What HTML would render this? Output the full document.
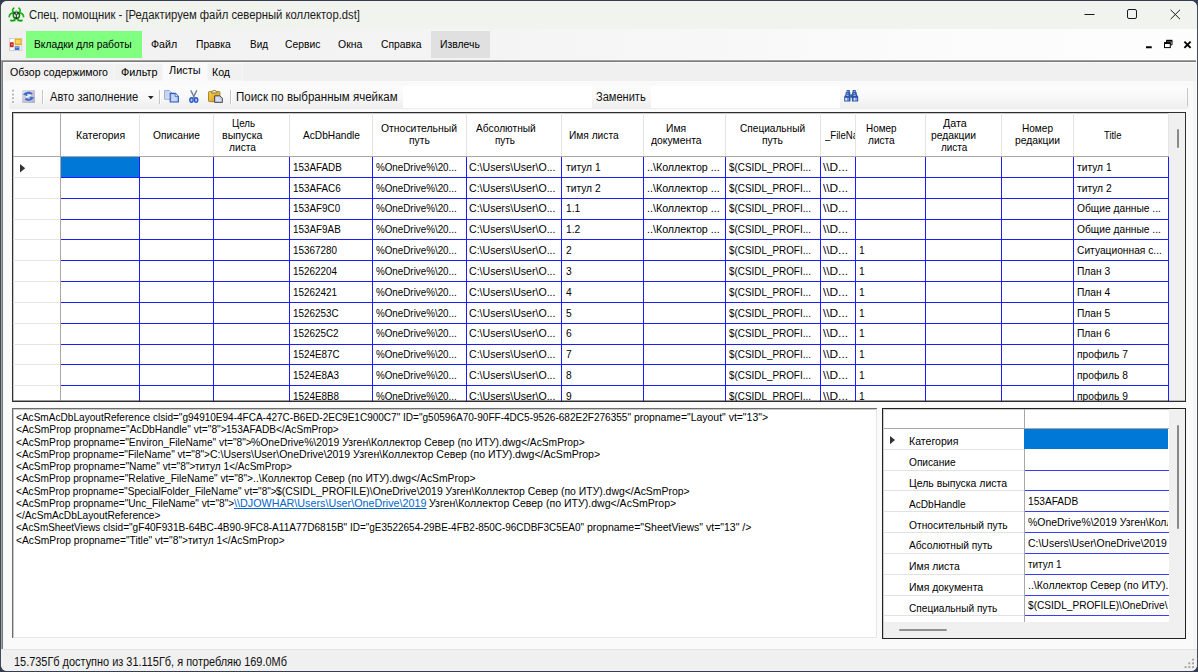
<!DOCTYPE html>
<html lang="ru"><head><meta charset="utf-8"><title>Спец. помощник</title><style>
html,body{margin:0;padding:0}
body{width:1198px;height:672px;background:#353d50;overflow:hidden;position:relative;font-family:"Liberation Sans",sans-serif}
.b{position:absolute}
.t{position:absolute;white-space:pre;transform-origin:0 50%;color:#000}
.clip{position:absolute;overflow:hidden}
u{text-decoration:underline;color:#0066cc}
svg{position:absolute;overflow:visible}
</style></head><body>
<div class="b" style="left:0.00px;top:6.00px;width:1.00px;height:660.00px;background:#444a55;"></div>
<div class="b" style="left:1197.00px;top:6.00px;width:1.00px;height:660.00px;background:#444a55;"></div>
<div class="b" style="left:1.00px;top:1.00px;width:1196.00px;height:670.00px;background:#f0f0f0;border-radius:6px;"></div>
<div class="b" style="left:1.00px;top:1.00px;width:1196.00px;height:28.00px;background:#f1f3ee;border-radius:6px 6px 0 0;"></div>
<div class="b" style="left:1.00px;top:29.00px;width:1196.00px;height:31.50px;background:linear-gradient(90deg,#f0f0f0 0,#f2f2f2 14%,#f4f4f4 40%,#f7f7f7 58%,#fbfbfb 76%,#fdfdfd 100%);"></div>
<div class="b" style="left:25.50px;top:31.00px;width:116.50px;height:26.50px;background:#80ff80;"></div>
<div class="b" style="left:431.40px;top:31.00px;width:58.60px;height:26.50px;background:#e0e0e0;"></div>
<div class="b" style="left:1.00px;top:60.00px;width:1195.00px;height:1.00px;background:#a2a2a2;"></div>
<div class="b" style="left:2.00px;top:61.00px;width:1194.00px;height:1.00px;background:#7a7a7a;"></div>
<div class="b" style="left:1.00px;top:60.00px;width:1.00px;height:588.50px;background:#a0a0a0;"></div>
<div class="b" style="left:2.00px;top:61.00px;width:1.00px;height:587.50px;background:#7c7c7c;"></div>
<div class="b" style="left:1196.00px;top:60.00px;width:1.00px;height:589.00px;background:#ffffff;"></div>
<div class="b" style="left:3.00px;top:62.00px;width:1193.00px;height:19.00px;background:#f0f0f0;box-shadow:inset 1px 1px 0 0 #fbfbfb;"></div>
<div class="b" style="left:3.00px;top:81.00px;width:1189.50px;height:567.50px;background:#fafafa;"></div>
<div class="b" style="left:1192.50px;top:81.00px;width:3.00px;height:567.50px;background:#f5f5f5;"></div>
<div class="b" style="left:5.20px;top:63.30px;width:108.80px;height:17.70px;background:#f1f1f1;box-shadow:inset 0 0 0 1px #f6f6f6;"></div>
<div class="b" style="left:114.40px;top:63.30px;width:48.30px;height:17.70px;background:#f1f1f1;box-shadow:inset 0 0 0 1px #f6f6f6;"></div>
<div class="b" style="left:207.20px;top:63.30px;width:36.10px;height:17.70px;background:#f1f1f1;box-shadow:inset 0 0 0 1px #f6f6f6;"></div>
<div class="b" style="left:162.70px;top:62.00px;width:44.50px;height:19.50px;background:#fafafa;"></div>
<div class="b" style="left:9.00px;top:85.50px;width:1180.00px;height:23.70px;background:linear-gradient(#fcfcfc,#f8f8f8 50%,#efefef 92%,#ededed);border-radius:2px 3px 3px 2px;"></div>
<div class="b" style="left:1187.30px;top:88.00px;width:1.00px;height:18.00px;background:#c8c8c8;"></div>
<div class="b" style="left:403.00px;top:86.00px;width:189.00px;height:22.00px;background:#fff;"></div>
<div class="b" style="left:650.80px;top:86.00px;width:189.20px;height:22.00px;background:#fff;"></div>
<svg style="left:12px;top:89px" width="4" height="15" viewBox="0 0 4 15"><rect x="1" y="1.8" width="1.6" height="1.6" fill="#fff"/><rect x="0.1" y="0.8" width="1.9" height="1.7" fill="#b0b0b0"/><rect x="1" y="5.7" width="1.6" height="1.6" fill="#fff"/><rect x="0.1" y="4.7" width="1.9" height="1.7" fill="#b0b0b0"/><rect x="1" y="9.4" width="1.6" height="1.6" fill="#fff"/><rect x="0.1" y="8.4" width="1.9" height="1.7" fill="#b0b0b0"/><rect x="1" y="13.2" width="1.6" height="1.6" fill="#fff"/><rect x="0.1" y="12.2" width="1.9" height="1.7" fill="#b0b0b0"/></svg>
<div class="b" style="left:42.00px;top:90.00px;width:1.00px;height:14.00px;background:#c6c6c6;"></div>
<div class="b" style="left:43.00px;top:90.00px;width:1.00px;height:14.00px;background:#fefefe;"></div>
<div class="b" style="left:159.00px;top:90.00px;width:1.00px;height:14.00px;background:#c6c6c6;"></div>
<div class="b" style="left:160.00px;top:90.00px;width:1.00px;height:14.00px;background:#fefefe;"></div>
<div class="b" style="left:230.00px;top:90.00px;width:1.00px;height:14.00px;background:#c6c6c6;"></div>
<div class="b" style="left:231.00px;top:90.00px;width:1.00px;height:14.00px;background:#fefefe;"></div>
<svg style="left:148px;top:95.5px" width="6" height="4" viewBox="0 0 6 4"><path d="M0 0h5.6L2.8 3.2z" fill="#222"/></svg>
<div class="b" style="left:12.00px;top:112.00px;width:1174.00px;height:290.00px;background:#fff;box-shadow:inset 0 0 0 1px #2e2e2e, inset 0 0 0 2px rgba(0,0,0,.22);"></div>
<div class="b" style="left:1169.00px;top:113.00px;width:16.00px;height:288.00px;background:#f0f0f0;"></div>
<div class="b" style="left:1176.50px;top:128.50px;width:2.00px;height:19.50px;background:#8a8a8a;border-radius:1px;"></div>
<div class="b" style="left:13.00px;top:156.00px;width:1156.00px;height:1.00px;background:#a8a8a8;"></div>
<div class="b" style="left:60.00px;top:113.00px;width:1.00px;height:288.00px;background:#a8a8a8;"></div>
<div class="b" style="left:139.00px;top:113.00px;width:1.00px;height:43.00px;background:#e4e4e4;"></div>
<div class="b" style="left:213.00px;top:113.00px;width:1.00px;height:43.00px;background:#e4e4e4;"></div>
<div class="b" style="left:289.00px;top:113.00px;width:1.00px;height:43.00px;background:#e4e4e4;"></div>
<div class="b" style="left:372.00px;top:113.00px;width:1.00px;height:43.00px;background:#e4e4e4;"></div>
<div class="b" style="left:466.00px;top:113.00px;width:1.00px;height:43.00px;background:#e4e4e4;"></div>
<div class="b" style="left:561.00px;top:113.00px;width:1.00px;height:43.00px;background:#e4e4e4;"></div>
<div class="b" style="left:643.00px;top:113.00px;width:1.00px;height:43.00px;background:#e4e4e4;"></div>
<div class="b" style="left:725.00px;top:113.00px;width:1.00px;height:43.00px;background:#e4e4e4;"></div>
<div class="b" style="left:820.00px;top:113.00px;width:1.00px;height:43.00px;background:#e4e4e4;"></div>
<div class="b" style="left:855.00px;top:113.00px;width:1.00px;height:43.00px;background:#e4e4e4;"></div>
<div class="b" style="left:925.00px;top:113.00px;width:1.00px;height:43.00px;background:#e4e4e4;"></div>
<div class="b" style="left:1001.00px;top:113.00px;width:1.00px;height:43.00px;background:#e4e4e4;"></div>
<div class="b" style="left:1073.00px;top:113.00px;width:1.00px;height:43.00px;background:#e4e4e4;"></div>
<div class="b" style="left:1168.00px;top:113.00px;width:1.00px;height:43.00px;background:#e4e4e4;"></div>
<div class="b" style="left:13.00px;top:177.00px;width:47.00px;height:1.00px;background:#e6e6e6;"></div>
<div class="b" style="left:13.00px;top:198.00px;width:47.00px;height:1.00px;background:#e6e6e6;"></div>
<div class="b" style="left:13.00px;top:219.00px;width:47.00px;height:1.00px;background:#e6e6e6;"></div>
<div class="b" style="left:13.00px;top:239.00px;width:47.00px;height:1.00px;background:#e6e6e6;"></div>
<div class="b" style="left:13.00px;top:260.00px;width:47.00px;height:1.00px;background:#e6e6e6;"></div>
<div class="b" style="left:13.00px;top:281.00px;width:47.00px;height:1.00px;background:#e6e6e6;"></div>
<div class="b" style="left:13.00px;top:302.00px;width:47.00px;height:1.00px;background:#e6e6e6;"></div>
<div class="b" style="left:13.00px;top:323.00px;width:47.00px;height:1.00px;background:#e6e6e6;"></div>
<div class="b" style="left:13.00px;top:344.00px;width:47.00px;height:1.00px;background:#e6e6e6;"></div>
<div class="b" style="left:13.00px;top:364.00px;width:47.00px;height:1.00px;background:#e6e6e6;"></div>
<div class="b" style="left:13.00px;top:385.00px;width:47.00px;height:1.00px;background:#e6e6e6;"></div>
<div class="b" style="left:139.00px;top:157.00px;width:1.00px;height:244.00px;background:#1c1cff;"></div>
<div class="b" style="left:213.00px;top:157.00px;width:1.00px;height:244.00px;background:#1c1cff;"></div>
<div class="b" style="left:289.00px;top:157.00px;width:1.00px;height:244.00px;background:#1c1cff;"></div>
<div class="b" style="left:372.00px;top:157.00px;width:1.00px;height:244.00px;background:#1c1cff;"></div>
<div class="b" style="left:466.00px;top:157.00px;width:1.00px;height:244.00px;background:#1c1cff;"></div>
<div class="b" style="left:561.00px;top:157.00px;width:1.00px;height:244.00px;background:#1c1cff;"></div>
<div class="b" style="left:643.00px;top:157.00px;width:1.00px;height:244.00px;background:#1c1cff;"></div>
<div class="b" style="left:725.00px;top:157.00px;width:1.00px;height:244.00px;background:#1c1cff;"></div>
<div class="b" style="left:820.00px;top:157.00px;width:1.00px;height:244.00px;background:#1c1cff;"></div>
<div class="b" style="left:855.00px;top:157.00px;width:1.00px;height:244.00px;background:#1c1cff;"></div>
<div class="b" style="left:925.00px;top:157.00px;width:1.00px;height:244.00px;background:#1c1cff;"></div>
<div class="b" style="left:1001.00px;top:157.00px;width:1.00px;height:244.00px;background:#1c1cff;"></div>
<div class="b" style="left:1073.00px;top:157.00px;width:1.00px;height:244.00px;background:#1c1cff;"></div>
<div class="b" style="left:1168.00px;top:157.00px;width:1.00px;height:244.00px;background:#1c1cff;"></div>
<div class="b" style="left:61.00px;top:177.00px;width:1108.00px;height:1.00px;background:#1c1cff;"></div>
<div class="b" style="left:61.00px;top:198.00px;width:1108.00px;height:1.00px;background:#1c1cff;"></div>
<div class="b" style="left:61.00px;top:219.00px;width:1108.00px;height:1.00px;background:#1c1cff;"></div>
<div class="b" style="left:61.00px;top:239.00px;width:1108.00px;height:1.00px;background:#1c1cff;"></div>
<div class="b" style="left:61.00px;top:260.00px;width:1108.00px;height:1.00px;background:#1c1cff;"></div>
<div class="b" style="left:61.00px;top:281.00px;width:1108.00px;height:1.00px;background:#1c1cff;"></div>
<div class="b" style="left:61.00px;top:302.00px;width:1108.00px;height:1.00px;background:#1c1cff;"></div>
<div class="b" style="left:61.00px;top:323.00px;width:1108.00px;height:1.00px;background:#1c1cff;"></div>
<div class="b" style="left:61.00px;top:344.00px;width:1108.00px;height:1.00px;background:#1c1cff;"></div>
<div class="b" style="left:61.00px;top:364.00px;width:1108.00px;height:1.00px;background:#1c1cff;"></div>
<div class="b" style="left:61.00px;top:385.00px;width:1108.00px;height:1.00px;background:#1c1cff;"></div>
<div class="b" style="left:60.60px;top:156.80px;width:78.40px;height:20.00px;background:#0078d7;"></div>
<svg style="left:20px;top:163.9px" width="6" height="9" viewBox="0 0 6 9"><path d="M0 0L5.2 4.3L0 8.6z" fill="#333"/></svg>
<div class="b" style="left:12.00px;top:408.00px;width:865.00px;height:230.00px;background:#fff;box-shadow:inset 1px 1px 0 0 #6c6c6c, inset -1px -1px 0 0 #e6e6e6, inset 2px 2px 0 0 #c8c8c8;"></div>
<div class="b" style="left:882.00px;top:408.00px;width:304.00px;height:230.50px;background:#fff;box-shadow:inset 0 0 0 1px #222, inset 0 0 0 2px rgba(0,0,0,.2);"></div>
<div class="b" style="left:1168.50px;top:409.00px;width:16.00px;height:213.00px;background:#f0f0f0;"></div>
<div class="b" style="left:883.50px;top:622.00px;width:301.00px;height:15.50px;background:#f0f0f0;"></div>
<div class="b" style="left:1176.50px;top:425.00px;width:2.00px;height:104.00px;background:#8a8a8a;border-radius:1px;"></div>
<div class="b" style="left:899.00px;top:629.50px;width:47.50px;height:1.60px;background:#8a8a8a;border-radius:1px;"></div>
<div class="b" style="left:884.00px;top:428.00px;width:285.00px;height:1.00px;background:#a8a8a8;"></div>
<div class="b" style="left:1024.00px;top:409.00px;width:1.00px;height:213.00px;background:#a8a8a8;"></div>
<div class="b" style="left:884.00px;top:449.00px;width:140.00px;height:1.00px;background:#e2e2e2;"></div>
<div class="b" style="left:884.00px;top:470.00px;width:140.00px;height:1.00px;background:#e2e2e2;"></div>
<div class="b" style="left:1025.00px;top:470.00px;width:144.00px;height:1.00px;background:#3c3cff;"></div>
<div class="b" style="left:884.00px;top:490.00px;width:140.00px;height:1.00px;background:#e2e2e2;"></div>
<div class="b" style="left:1025.00px;top:490.00px;width:144.00px;height:1.00px;background:#3c3cff;"></div>
<div class="b" style="left:884.00px;top:511.00px;width:140.00px;height:1.00px;background:#e2e2e2;"></div>
<div class="b" style="left:1025.00px;top:511.00px;width:144.00px;height:1.00px;background:#3c3cff;"></div>
<div class="b" style="left:884.00px;top:532.00px;width:140.00px;height:1.00px;background:#e2e2e2;"></div>
<div class="b" style="left:1025.00px;top:532.00px;width:144.00px;height:1.00px;background:#3c3cff;"></div>
<div class="b" style="left:884.00px;top:553.00px;width:140.00px;height:1.00px;background:#e2e2e2;"></div>
<div class="b" style="left:1025.00px;top:553.00px;width:144.00px;height:1.00px;background:#3c3cff;"></div>
<div class="b" style="left:884.00px;top:574.00px;width:140.00px;height:1.00px;background:#e2e2e2;"></div>
<div class="b" style="left:1025.00px;top:574.00px;width:144.00px;height:1.00px;background:#3c3cff;"></div>
<div class="b" style="left:884.00px;top:595.00px;width:140.00px;height:1.00px;background:#e2e2e2;"></div>
<div class="b" style="left:1025.00px;top:595.00px;width:144.00px;height:1.00px;background:#3c3cff;"></div>
<div class="b" style="left:884.00px;top:615.00px;width:140.00px;height:1.00px;background:#e2e2e2;"></div>
<div class="b" style="left:1025.00px;top:615.00px;width:144.00px;height:1.00px;background:#3c3cff;"></div>
<div class="b" style="left:1024.30px;top:428.90px;width:144.20px;height:20.53px;background:#0078d7;"></div>
<svg style="left:889.8px;top:435.6px" width="6" height="9" viewBox="0 0 6 9"><path d="M0 0L5 4.1L0 8.2z" fill="#333"/></svg>
<div class="b" style="left:1.00px;top:648.50px;width:1196.00px;height:1.50px;background:#e4e4e4;"></div>
<div class="b" style="left:1.00px;top:650.00px;width:1196.00px;height:21.00px;background:#f0f0f0;border-radius:0 0 6px 6px;"></div>
<svg style="left:1184px;top:658px" width="11" height="11" viewBox="0 0 11 11"><rect x="8.2" y="8.2" width="1.8" height="1.8" fill="#9c9c9c"/><rect x="4.4" y="8.2" width="1.8" height="1.8" fill="#9c9c9c"/><rect x="0.7" y="8.2" width="1.8" height="1.8" fill="#9c9c9c"/><rect x="8.2" y="4.4" width="1.8" height="1.8" fill="#9c9c9c"/><rect x="4.4" y="4.4" width="1.8" height="1.8" fill="#9c9c9c"/><rect x="8.2" y="0.7" width="1.8" height="1.8" fill="#9c9c9c"/></svg>
<svg style="left:1084px;top:8px" width="106" height="14" viewBox="0 0 106 14" fill="none" stroke="#1b1b1b" stroke-width="1"><path d="M0.5 6.5H10.5"/><rect x="43.5" y="1.5" width="9" height="9" rx="1.5"/><path d="M86.6 1.8L96 11.2M96 1.8L86.6 11.2"/></svg>
<svg style="left:1145px;top:38px" width="50" height="14" viewBox="0 0 50 14" fill="none" stroke="#000"><path d="M1 9.25H6.75" stroke-width="2"/><path d="M21.6 5V3H27v3.9h-1.6" stroke-width="1"/><path d="M21.2 2.6H27.4" stroke-width="1.6"/><rect x="19.5" y="5.3" width="5.8" height="4.3" stroke-width="1"/><path d="M19 5H25.8" stroke-width="1.8"/><path d="M39.4 3.6L45.6 9.8M45.6 3.6L39.4 9.8" stroke-width="1.9"/></svg>
<!-- app icon: biohazard -->
<svg style="left:7.5px;top:6.5px" width="17" height="15" viewBox="0 0 17 15">
 <g fill="none" stroke="#16b016" stroke-width="1.7" stroke-linecap="round">
  <path d="M5.8 1.2C4 2.6 4.2 5.2 6.4 6.2"/><path d="M11 1.2C12.8 2.6 12.6 5.2 10.4 6.2"/>
  <path d="M1.2 9.6C1.4 6.8 3.6 5.6 5.6 6.6"/><path d="M15.6 9.6C15.4 6.8 13.2 5.6 11.2 6.6"/>
  <path d="M3 13.4C5 14.2 7.2 13.2 7.4 10.8"/><path d="M13.8 13.4C11.8 14.2 9.6 13.2 9.4 10.8"/>
 </g>
 <circle cx="8.4" cy="8.2" r="3.1" fill="none" stroke="#157a15" stroke-width="1.5"/>
 <path d="M6.2 5.4L8.4 8.2L10.6 5.4M8.4 8.2V12.6" stroke="#222" stroke-width="1.2" fill="none" opacity=".8"/>
 <circle cx="8.4" cy="4.2" r="1" fill="#9a9"/>
 <path d="M2.4 13.6h5M9.4 13.6h5" stroke="#0aa00a" stroke-width="1.4"/>
</svg>
<!-- mdi child icon -->
<svg style="left:9.4px;top:38px" width="13.2" height="12.8" viewBox="0 0 13.2 12.8">
 <rect x=".4" y=".4" width="12.4" height="12" fill="#fdfdfd" stroke="#c9c9c9" stroke-width=".8"/>
 <rect x=".9" y="4.3" width="3.9" height="4.9" rx=".6" fill="#c8281e"/><rect x="2" y="5.8" width="1.6" height="1.6" fill="#ee8078"/>
 <rect x="5.6" y=".8" width="7" height="6.4" rx=".6" fill="#e8a818"/><rect x="6.7" y="1.8" width="4.8" height="3.8" fill="#ffd858"/>
 <rect x="5.6" y="8.2" width="5" height="3.7" rx=".4" fill="#3a6fd8"/><rect x="6.3" y="8.7" width="3.6" height="1.4" fill="#7aa4f0"/>
 <path d="M5.2 .8v11.2M.8 9.8h4.4M11.2 8v4" stroke="#e4e4e4" stroke-width=".6"/>
</svg>
<!-- refresh -->
<svg style="left:21.8px;top:90px" width="13" height="13" viewBox="0 0 13 13">
 <defs><linearGradient id="rg" x1="0" y1="0" x2="1" y2="1"><stop offset="0" stop-color="#e0e0ee"/><stop offset=".5" stop-color="#c6c6da"/><stop offset="1" stop-color="#b0b0cc"/></linearGradient></defs>
 <rect width="13" height="13" fill="url(#rg)"/>
 <path d="M.9 4.6L3.4 2.6C5.6 1.2 8.8 1.4 10.8 3.4L9.4 4.6C7.8 3.4 6 3.4 4.8 4.2L5.6 6.2Z" fill="#3a6cc8"/>
 <path d="M12.2 7.4L9.8 9.8C7.6 11.2 4.6 11 2.8 9.2L4.2 8C5.6 9 7.2 9 8.4 8.2L7.4 6.4Z" fill="#3a6cc8"/>
 <path d="M4.4 7.4C5.8 6 7 6.4 8.6 5" stroke="#f6f8fd" stroke-width="1.4" fill="none"/>
</svg>
<!-- copy -->
<svg style="left:164.2px;top:89.6px" width="15" height="12.6" viewBox="0 0 15 12.6">
 <path d="M.6 .6H5.4L8 3.2V9.2H.6Z" fill="#d6e2f6" stroke="#8aa2cc" stroke-width=".9"/>
 <path d="M1.6 2h3M1.6 4h5M1.6 6h3" stroke="#a8bfe6" stroke-width=".8"/>
 <path d="M6.2 3.4H11.4L14.4 6.4V12H6.2Z" fill="#b0c8f2" stroke="#2f5abc" stroke-width="1.1"/>
 <path d="M11.2 3.6V6.6H14.2" fill="#e8f0fc" stroke="#3e68c4" stroke-width=".8"/>
 <path d="M7.6 6h2.6M7.6 8h5M7.6 10h5" stroke="#e4ecfa" stroke-width=".9"/>
</svg>
<!-- cut -->
<svg style="left:188.6px;top:89.8px" width="9.6" height="13" viewBox="0 0 9.6 13">
 <path d="M1.8 .3L5.6 8M7.8 .3L4 8" stroke="#76849c" stroke-width="1.5" fill="none"/>
 <ellipse cx="2.5" cy="10.1" rx="1.7" ry="2.3" fill="#a8c4f4" stroke="#2c5cc8" stroke-width="1.4"/>
 <ellipse cx="7.1" cy="10.1" rx="1.7" ry="2.3" fill="#a8c4f4" stroke="#2c5cc8" stroke-width="1.4"/>
</svg>
<!-- paste -->
<svg style="left:208px;top:89.8px" width="15" height="13" viewBox="0 0 15 13">
 <defs><linearGradient id="pg" x1="0" y1="0" x2="1" y2="1"><stop offset="0" stop-color="#f8d050"/><stop offset="1" stop-color="#dc9c10"/></linearGradient></defs>
 <rect x=".5" y="1.6" width="11.4" height="10" rx=".8" fill="url(#pg)" stroke="#9a7a28" stroke-width=".9"/>
 <path d="M3.6 3.2V1.6L5 .5H7.4L8.8 1.6V3.2Z" fill="#d8c88c" stroke="#8c7a44" stroke-width=".8"/>
 <rect x="5.5" y="1" width="1.4" height="1" fill="#fff8d8"/>
 <path d="M6.6 5.8H11.6L14.4 8.2V12.4H6.6Z" fill="#c4d0e4" stroke="#3c3c44" stroke-width=".9"/>
 <path d="M8 8h3M8 10h5" stroke="#eef2fa" stroke-width=".9"/>
</svg>
<!-- binoculars -->
<svg style="left:844px;top:90px" width="14.4" height="12" viewBox="0 0 14.4 12">
 <g fill="#2c56a8">
  <path d="M2.6 0H5.8V2.2H6.3V4.6H6.5V11.6H.2V6.6L1.6 4.4V2.2H2.6Z"/>
  <path d="M8.6 0H11.8V2.2H12.8V4.4L14.2 6.6V11.6H7.9V4.6H8.1V2.2H8.6Z"/>
  <rect x="6.3" y="4.4" width="1.8" height="3.4"/>
 </g>
 <rect x="1.2" y="7.8" width="2" height="2.8" fill="#dce6f8"/><rect x="3.2" y="7.8" width="1.6" height="2.8" fill="#8aa8e0"/>
 <rect x="9.6" y="7.8" width="2" height="2.8" fill="#dce6f8"/><rect x="11.6" y="7.8" width="1.4" height="2.8" fill="#8aa8e0"/>
 <rect x="2.2" y="4.8" width="2.4" height=".9" fill="#c8d8f4"/><rect x="9.4" y="4.8" width="2.4" height=".9" fill="#c8d8f4"/>
 <rect x="3.4" y=".9" width="1" height="1" fill="#b8ccf0"/><rect x="9.6" y=".9" width="1.6" height=".7" fill="#b8ccf0"/>
 <rect x="2.8" y="2.9" width="1.6" height=".8" fill="#a8c0ec"/><rect x="9.4" y="2.9" width="1.6" height=".8" fill="#a8c0ec"/>
</svg>

<span class="t" style="left:29.40px;top:7.34px;font-size:12px;line-height:16px;transform:scaleX(0.9400);color:#1a1a1a;">Спец. помощник - [Редактируем файл северный коллектор.dst]</span>
<span class="t" style="left:34.40px;top:37.09px;font-size:11px;line-height:15px;transform:scaleX(0.9344);">Вкладки для работы</span>
<span class="t" style="left:151.40px;top:37.09px;font-size:11px;line-height:15px;transform:scaleX(0.9650);">Файл</span>
<span class="t" style="left:196.00px;top:37.09px;font-size:11px;line-height:15px;transform:scaleX(0.9335);">Правка</span>
<span class="t" style="left:249.80px;top:37.09px;font-size:11px;line-height:15px;transform:scaleX(0.9042);">Вид</span>
<span class="t" style="left:285.00px;top:37.09px;font-size:11px;line-height:15px;transform:scaleX(0.9370);">Сервис</span>
<span class="t" style="left:338.30px;top:37.09px;font-size:11px;line-height:15px;transform:scaleX(0.9506);">Окна</span>
<span class="t" style="left:380.60px;top:37.09px;font-size:11px;line-height:15px;transform:scaleX(0.9408);">Справка</span>
<span class="t" style="left:440.00px;top:37.09px;font-size:11px;line-height:15px;transform:scaleX(0.9434);">Извлечь</span>
<span class="t" style="left:10.00px;top:65.49px;font-size:11px;line-height:15px;transform:scaleX(0.9602);">Обзор содержимого</span>
<span class="t" style="left:120.50px;top:65.49px;font-size:11px;line-height:15px;transform:scaleX(0.9877);">Фильтр</span>
<span class="t" style="left:169.00px;top:63.49px;font-size:11px;line-height:15px;transform:scaleX(0.9902);">Листы</span>
<span class="t" style="left:212.00px;top:65.49px;font-size:11px;line-height:15px;transform:scaleX(0.9624);">Код</span>
<span class="t" style="left:50.40px;top:88.74px;font-size:12px;line-height:16px;transform:scaleX(0.9296);color:#111;">Авто заполнение</span>
<span class="t" style="left:236.00px;top:88.74px;font-size:12px;line-height:16px;transform:scaleX(0.9599);color:#111;">Поиск по выбранным ячейкам</span>
<span class="t" style="left:596.30px;top:88.74px;font-size:12px;line-height:16px;transform:scaleX(0.9214);color:#111;">Заменить</span>
<span class="t" style="left:75.80px;top:127.89px;font-size:11px;line-height:15px;transform:scaleX(0.9565);">Категория</span>
<span class="t" style="left:152.50px;top:127.89px;font-size:11px;line-height:15px;transform:scaleX(0.9284);">Описание</span>
<span class="t" style="left:231.50px;top:115.89px;font-size:11px;line-height:15px;transform:scaleX(0.8830);">Цель</span>
<span class="t" style="left:221.50px;top:127.89px;font-size:11px;line-height:15px;transform:scaleX(0.9697);">выпуска</span>
<span class="t" style="left:228.50px;top:139.89px;font-size:11px;line-height:15px;transform:scaleX(0.9275);">листа</span>
<span class="t" style="left:303.00px;top:127.89px;font-size:11px;line-height:15px;transform:scaleX(0.9228);">AcDbHandle</span>
<span class="t" style="left:381.00px;top:121.29px;font-size:11px;line-height:15px;transform:scaleX(0.9456);">Относительный</span>
<span class="t" style="left:408.75px;top:133.29px;font-size:11px;line-height:15px;transform:scaleX(0.9332);">путь</span>
<span class="t" style="left:475.75px;top:121.29px;font-size:11px;line-height:15px;transform:scaleX(0.9248);">Абсолютный</span>
<span class="t" style="left:495.00px;top:133.29px;font-size:11px;line-height:15px;transform:scaleX(0.8995);">путь</span>
<span class="t" style="left:569.30px;top:127.89px;font-size:11px;line-height:15px;transform:scaleX(0.9258);">Имя листа</span>
<span class="t" style="left:666.40px;top:121.29px;font-size:11px;line-height:15px;transform:scaleX(0.9376);">Имя</span>
<span class="t" style="left:650.90px;top:133.29px;font-size:11px;line-height:15px;transform:scaleX(0.9433);">документа</span>
<span class="t" style="left:740.30px;top:121.29px;font-size:11px;line-height:15px;transform:scaleX(0.9187);">Специальный</span>
<span class="t" style="left:762.00px;top:133.29px;font-size:11px;line-height:15px;transform:scaleX(0.9400);">путь</span>
<div class="clip" style="left:824.50px;top:127.89px;width:30.00px;height:15px"><span class="t" style="left:0;top:0;font-size:11px;line-height:15px;transform:scaleX(0.8706);">_FileNa</span></div>
<span class="t" style="left:866.25px;top:121.29px;font-size:11px;line-height:15px;transform:scaleX(0.9008);">Номер</span>
<span class="t" style="left:867.50px;top:133.29px;font-size:11px;line-height:15px;transform:scaleX(0.9189);">листа</span>
<span class="t" style="left:942.50px;top:115.89px;font-size:11px;line-height:15px;transform:scaleX(0.9750);">Дата</span>
<span class="t" style="left:931.25px;top:127.89px;font-size:11px;line-height:15px;transform:scaleX(0.9387);">редакции</span>
<span class="t" style="left:941.25px;top:139.89px;font-size:11px;line-height:15px;transform:scaleX(0.9018);">листа</span>
<span class="t" style="left:1022.00px;top:121.29px;font-size:11px;line-height:15px;transform:scaleX(0.9156);">Номер</span>
<span class="t" style="left:1014.50px;top:133.29px;font-size:11px;line-height:15px;transform:scaleX(0.9387);">редакции</span>
<span class="t" style="left:1104.40px;top:127.89px;font-size:11px;line-height:15px;transform:scaleX(0.8540);">Title</span>
<span class="t" style="left:293.00px;top:159.69px;font-size:11px;line-height:15px;transform:scaleX(0.8970);">153AFADB</span>
<span class="t" style="left:376.25px;top:159.69px;font-size:11px;line-height:15px;transform:scaleX(0.8924);">%OneDrive%\20...</span>
<span class="t" style="left:469.25px;top:159.69px;font-size:11px;line-height:15px;transform:scaleX(0.9628);">C:\Users\User\O...</span>
<span class="t" style="left:565.50px;top:159.69px;font-size:11px;line-height:15px;transform:scaleX(0.9300);">титул 1</span>
<span class="t" style="left:647.10px;top:159.69px;font-size:11px;line-height:15px;transform:scaleX(0.9730);">..\Коллектор ...</span>
<span class="t" style="left:729.00px;top:159.69px;font-size:11px;line-height:15px;transform:scaleX(0.8992);">$(CSIDL_PROFI...</span>
<span class="t" style="left:823.30px;top:159.69px;font-size:11px;line-height:15px;transform:scaleX(1.0760);">\\D...</span>
<span class="t" style="left:1077.30px;top:159.69px;font-size:11px;line-height:15px;transform:scaleX(0.9300);">титул 1</span>
<span class="t" style="left:293.00px;top:180.52px;font-size:11px;line-height:15px;transform:scaleX(0.8970);">153AFAC6</span>
<span class="t" style="left:376.25px;top:180.52px;font-size:11px;line-height:15px;transform:scaleX(0.8924);">%OneDrive%\20...</span>
<span class="t" style="left:469.25px;top:180.52px;font-size:11px;line-height:15px;transform:scaleX(0.9628);">C:\Users\User\O...</span>
<span class="t" style="left:565.50px;top:180.52px;font-size:11px;line-height:15px;transform:scaleX(0.9300);">титул 2</span>
<span class="t" style="left:647.10px;top:180.52px;font-size:11px;line-height:15px;transform:scaleX(0.9730);">..\Коллектор ...</span>
<span class="t" style="left:729.00px;top:180.52px;font-size:11px;line-height:15px;transform:scaleX(0.8992);">$(CSIDL_PROFI...</span>
<span class="t" style="left:823.30px;top:180.52px;font-size:11px;line-height:15px;transform:scaleX(1.0760);">\\D...</span>
<span class="t" style="left:1077.30px;top:180.52px;font-size:11px;line-height:15px;transform:scaleX(0.9300);">титул 2</span>
<span class="t" style="left:293.00px;top:201.35px;font-size:11px;line-height:15px;transform:scaleX(0.8970);">153AF9C0</span>
<span class="t" style="left:376.25px;top:201.35px;font-size:11px;line-height:15px;transform:scaleX(0.8924);">%OneDrive%\20...</span>
<span class="t" style="left:469.25px;top:201.35px;font-size:11px;line-height:15px;transform:scaleX(0.9628);">C:\Users\User\O...</span>
<span class="t" style="left:565.50px;top:201.35px;font-size:11px;line-height:15px;transform:scaleX(0.9300);">1.1</span>
<span class="t" style="left:647.10px;top:201.35px;font-size:11px;line-height:15px;transform:scaleX(0.9730);">..\Коллектор ...</span>
<span class="t" style="left:729.00px;top:201.35px;font-size:11px;line-height:15px;transform:scaleX(0.8992);">$(CSIDL_PROFI...</span>
<span class="t" style="left:823.30px;top:201.35px;font-size:11px;line-height:15px;transform:scaleX(1.0760);">\\D...</span>
<span class="t" style="left:1077.30px;top:201.35px;font-size:11px;line-height:15px;transform:scaleX(0.9300);">Общие данные ...</span>
<span class="t" style="left:293.00px;top:222.18px;font-size:11px;line-height:15px;transform:scaleX(0.8970);">153AF9AB</span>
<span class="t" style="left:376.25px;top:222.18px;font-size:11px;line-height:15px;transform:scaleX(0.8924);">%OneDrive%\20...</span>
<span class="t" style="left:469.25px;top:222.18px;font-size:11px;line-height:15px;transform:scaleX(0.9628);">C:\Users\User\O...</span>
<span class="t" style="left:565.50px;top:222.18px;font-size:11px;line-height:15px;transform:scaleX(0.9300);">1.2</span>
<span class="t" style="left:647.10px;top:222.18px;font-size:11px;line-height:15px;transform:scaleX(0.9730);">..\Коллектор ...</span>
<span class="t" style="left:729.00px;top:222.18px;font-size:11px;line-height:15px;transform:scaleX(0.8992);">$(CSIDL_PROFI...</span>
<span class="t" style="left:823.30px;top:222.18px;font-size:11px;line-height:15px;transform:scaleX(1.0760);">\\D...</span>
<span class="t" style="left:1077.30px;top:222.18px;font-size:11px;line-height:15px;transform:scaleX(0.9300);">Общие данные ...</span>
<span class="t" style="left:293.00px;top:243.01px;font-size:11px;line-height:15px;transform:scaleX(0.8970);">15367280</span>
<span class="t" style="left:376.25px;top:243.01px;font-size:11px;line-height:15px;transform:scaleX(0.8924);">%OneDrive%\20...</span>
<span class="t" style="left:469.25px;top:243.01px;font-size:11px;line-height:15px;transform:scaleX(0.9628);">C:\Users\User\O...</span>
<span class="t" style="left:565.50px;top:243.01px;font-size:11px;line-height:15px;transform:scaleX(0.9300);">2</span>
<span class="t" style="left:729.00px;top:243.01px;font-size:11px;line-height:15px;transform:scaleX(0.8992);">$(CSIDL_PROFI...</span>
<span class="t" style="left:823.30px;top:243.01px;font-size:11px;line-height:15px;transform:scaleX(1.0760);">\\D...</span>
<span class="t" style="left:858.50px;top:243.01px;font-size:11px;line-height:15px;transform:scaleX(0.9300);">1</span>
<span class="t" style="left:1077.30px;top:243.01px;font-size:11px;line-height:15px;transform:scaleX(0.9300);">Ситуационная с...</span>
<span class="t" style="left:293.00px;top:263.84px;font-size:11px;line-height:15px;transform:scaleX(0.8970);">15262204</span>
<span class="t" style="left:376.25px;top:263.84px;font-size:11px;line-height:15px;transform:scaleX(0.8924);">%OneDrive%\20...</span>
<span class="t" style="left:469.25px;top:263.84px;font-size:11px;line-height:15px;transform:scaleX(0.9628);">C:\Users\User\O...</span>
<span class="t" style="left:565.50px;top:263.84px;font-size:11px;line-height:15px;transform:scaleX(0.9300);">3</span>
<span class="t" style="left:729.00px;top:263.84px;font-size:11px;line-height:15px;transform:scaleX(0.8992);">$(CSIDL_PROFI...</span>
<span class="t" style="left:823.30px;top:263.84px;font-size:11px;line-height:15px;transform:scaleX(1.0760);">\\D...</span>
<span class="t" style="left:858.50px;top:263.84px;font-size:11px;line-height:15px;transform:scaleX(0.9300);">1</span>
<span class="t" style="left:1077.30px;top:263.84px;font-size:11px;line-height:15px;transform:scaleX(0.9300);">План 3</span>
<span class="t" style="left:293.00px;top:284.67px;font-size:11px;line-height:15px;transform:scaleX(0.8970);">15262421</span>
<span class="t" style="left:376.25px;top:284.67px;font-size:11px;line-height:15px;transform:scaleX(0.8924);">%OneDrive%\20...</span>
<span class="t" style="left:469.25px;top:284.67px;font-size:11px;line-height:15px;transform:scaleX(0.9628);">C:\Users\User\O...</span>
<span class="t" style="left:565.50px;top:284.67px;font-size:11px;line-height:15px;transform:scaleX(0.9300);">4</span>
<span class="t" style="left:729.00px;top:284.67px;font-size:11px;line-height:15px;transform:scaleX(0.8992);">$(CSIDL_PROFI...</span>
<span class="t" style="left:823.30px;top:284.67px;font-size:11px;line-height:15px;transform:scaleX(1.0760);">\\D...</span>
<span class="t" style="left:858.50px;top:284.67px;font-size:11px;line-height:15px;transform:scaleX(0.9300);">1</span>
<span class="t" style="left:1077.30px;top:284.67px;font-size:11px;line-height:15px;transform:scaleX(0.9300);">План 4</span>
<span class="t" style="left:293.00px;top:305.50px;font-size:11px;line-height:15px;transform:scaleX(0.8970);">1526253C</span>
<span class="t" style="left:376.25px;top:305.50px;font-size:11px;line-height:15px;transform:scaleX(0.8924);">%OneDrive%\20...</span>
<span class="t" style="left:469.25px;top:305.50px;font-size:11px;line-height:15px;transform:scaleX(0.9628);">C:\Users\User\O...</span>
<span class="t" style="left:565.50px;top:305.50px;font-size:11px;line-height:15px;transform:scaleX(0.9300);">5</span>
<span class="t" style="left:729.00px;top:305.50px;font-size:11px;line-height:15px;transform:scaleX(0.8992);">$(CSIDL_PROFI...</span>
<span class="t" style="left:823.30px;top:305.50px;font-size:11px;line-height:15px;transform:scaleX(1.0760);">\\D...</span>
<span class="t" style="left:858.50px;top:305.50px;font-size:11px;line-height:15px;transform:scaleX(0.9300);">1</span>
<span class="t" style="left:1077.30px;top:305.50px;font-size:11px;line-height:15px;transform:scaleX(0.9300);">План 5</span>
<span class="t" style="left:293.00px;top:326.33px;font-size:11px;line-height:15px;transform:scaleX(0.8970);">152625C2</span>
<span class="t" style="left:376.25px;top:326.33px;font-size:11px;line-height:15px;transform:scaleX(0.8924);">%OneDrive%\20...</span>
<span class="t" style="left:469.25px;top:326.33px;font-size:11px;line-height:15px;transform:scaleX(0.9628);">C:\Users\User\O...</span>
<span class="t" style="left:565.50px;top:326.33px;font-size:11px;line-height:15px;transform:scaleX(0.9300);">6</span>
<span class="t" style="left:729.00px;top:326.33px;font-size:11px;line-height:15px;transform:scaleX(0.8992);">$(CSIDL_PROFI...</span>
<span class="t" style="left:823.30px;top:326.33px;font-size:11px;line-height:15px;transform:scaleX(1.0760);">\\D...</span>
<span class="t" style="left:858.50px;top:326.33px;font-size:11px;line-height:15px;transform:scaleX(0.9300);">1</span>
<span class="t" style="left:1077.30px;top:326.33px;font-size:11px;line-height:15px;transform:scaleX(0.9300);">План 6</span>
<span class="t" style="left:293.00px;top:347.16px;font-size:11px;line-height:15px;transform:scaleX(0.8970);">1524E87C</span>
<span class="t" style="left:376.25px;top:347.16px;font-size:11px;line-height:15px;transform:scaleX(0.8924);">%OneDrive%\20...</span>
<span class="t" style="left:469.25px;top:347.16px;font-size:11px;line-height:15px;transform:scaleX(0.9628);">C:\Users\User\O...</span>
<span class="t" style="left:565.50px;top:347.16px;font-size:11px;line-height:15px;transform:scaleX(0.9300);">7</span>
<span class="t" style="left:729.00px;top:347.16px;font-size:11px;line-height:15px;transform:scaleX(0.8992);">$(CSIDL_PROFI...</span>
<span class="t" style="left:823.30px;top:347.16px;font-size:11px;line-height:15px;transform:scaleX(1.0760);">\\D...</span>
<span class="t" style="left:858.50px;top:347.16px;font-size:11px;line-height:15px;transform:scaleX(0.9300);">1</span>
<span class="t" style="left:1077.30px;top:347.16px;font-size:11px;line-height:15px;transform:scaleX(0.9300);">профиль 7</span>
<span class="t" style="left:293.00px;top:367.99px;font-size:11px;line-height:15px;transform:scaleX(0.8970);">1524E8A3</span>
<span class="t" style="left:376.25px;top:367.99px;font-size:11px;line-height:15px;transform:scaleX(0.8924);">%OneDrive%\20...</span>
<span class="t" style="left:469.25px;top:367.99px;font-size:11px;line-height:15px;transform:scaleX(0.9628);">C:\Users\User\O...</span>
<span class="t" style="left:565.50px;top:367.99px;font-size:11px;line-height:15px;transform:scaleX(0.9300);">8</span>
<span class="t" style="left:729.00px;top:367.99px;font-size:11px;line-height:15px;transform:scaleX(0.8992);">$(CSIDL_PROFI...</span>
<span class="t" style="left:823.30px;top:367.99px;font-size:11px;line-height:15px;transform:scaleX(1.0760);">\\D...</span>
<span class="t" style="left:858.50px;top:367.99px;font-size:11px;line-height:15px;transform:scaleX(0.9300);">1</span>
<span class="t" style="left:1077.30px;top:367.99px;font-size:11px;line-height:15px;transform:scaleX(0.9300);">профиль 8</span>
<span class="t" style="left:293.00px;top:388.82px;font-size:11px;line-height:15px;transform:scaleX(0.8970);">1524E8B8</span>
<span class="t" style="left:376.25px;top:388.82px;font-size:11px;line-height:15px;transform:scaleX(0.8924);">%OneDrive%\20...</span>
<span class="t" style="left:469.25px;top:388.82px;font-size:11px;line-height:15px;transform:scaleX(0.9628);">C:\Users\User\O...</span>
<span class="t" style="left:565.50px;top:388.82px;font-size:11px;line-height:15px;transform:scaleX(0.9300);">9</span>
<span class="t" style="left:729.00px;top:388.82px;font-size:11px;line-height:15px;transform:scaleX(0.8992);">$(CSIDL_PROFI...</span>
<span class="t" style="left:823.30px;top:388.82px;font-size:11px;line-height:15px;transform:scaleX(1.0760);">\\D...</span>
<span class="t" style="left:858.50px;top:388.82px;font-size:11px;line-height:15px;transform:scaleX(0.9300);">1</span>
<span class="t" style="left:1077.30px;top:388.82px;font-size:11px;line-height:15px;transform:scaleX(0.9300);">профиль 9</span>
<span class="t" style="left:15.50px;top:410.09px;font-size:11px;line-height:15px;transform:scaleX(0.9164);">&lt;AcSmAcDbLayoutReference </span>
<span class="t" style="left:152.50px;top:410.09px;font-size:11px;line-height:15px;transform:scaleX(0.9100);">clsid="g94910E94-4FCA-427C-B6ED-2EC9E1C900C7" </span>
<span class="t" style="left:402.50px;top:410.09px;font-size:11px;line-height:15px;transform:scaleX(0.9132);">ID="g50596A70-90FF-4DC5-9526-682E2F276355"</span>
<span class="t" style="left:630.50px;top:410.09px;font-size:11px;line-height:15px;transform:scaleX(0.9490);"> propname="Layout" vt="13"&gt;</span>
<span class="t" style="left:15.50px;top:422.34px;font-size:11px;line-height:15px;transform:scaleX(0.9327);">&lt;AcSmProp propname="AcDbHandle" vt="8"&gt;</span>
<span class="t" style="left:226.25px;top:422.34px;font-size:11px;line-height:15px;transform:scaleX(0.9174);">153AFADB&lt;/AcSmProp&gt;</span>
<span class="t" style="left:15.50px;top:434.59px;font-size:11px;line-height:15px;transform:scaleX(0.9256);">&lt;AcSmProp propname="Environ_FileName" vt="8"&gt;</span>
<span class="t" style="left:251.25px;top:434.59px;font-size:11px;line-height:15px;transform:scaleX(0.9447);">%OneDrive%\2019 Узген\Коллектор Север (по ИТУ).dwg</span>
<span class="t" style="left:521.25px;top:434.59px;font-size:11px;line-height:15px;transform:scaleX(0.9309);">&lt;/AcSmProp&gt;</span>
<span class="t" style="left:15.50px;top:446.84px;font-size:11px;line-height:15px;transform:scaleX(0.9182);">&lt;AcSmProp propname="FileName" vt="8"&gt;</span>
<span class="t" style="left:209.50px;top:446.84px;font-size:11px;line-height:15px;transform:scaleX(0.9589);">C:\Users\User\OneDrive\2019 Узген\Коллектор Север (по ИТУ).dwg&lt;/AcSmProp&gt;</span>
<span class="t" style="left:15.50px;top:459.09px;font-size:11px;line-height:15px;transform:scaleX(0.9273);">&lt;AcSmProp propname="Name" vt="8"&gt;</span>
<span class="t" style="left:195.00px;top:459.09px;font-size:11px;line-height:15px;transform:scaleX(0.9179);">титул 1&lt;/AcSmProp&gt;</span>
<span class="t" style="left:15.50px;top:471.34px;font-size:11px;line-height:15px;transform:scaleX(0.9217);">&lt;AcSmProp propname="Relative_FileName" vt="8"&gt;</span>
<span class="t" style="left:252.50px;top:471.34px;font-size:11px;line-height:15px;transform:scaleX(0.9412);">..\Коллектор Север (по ИТУ).dwg&lt;/AcSmProp&gt;</span>
<span class="t" style="left:15.50px;top:483.59px;font-size:11px;line-height:15px;transform:scaleX(0.9160);">&lt;AcSmProp propname="SpecialFolder_FileName" vt="8"&gt;</span>
<span class="t" style="left:276.25px;top:483.59px;font-size:11px;line-height:15px;transform:scaleX(0.9468);">$(CSIDL_PROFILE)\OneDrive\2019 Узген\Коллектор Север (по ИТУ).dwg&lt;/AcSmProp&gt;</span>
<span class="t" style="left:15.50px;top:495.84px;font-size:11px;line-height:15px;transform:scaleX(0.9211);">&lt;AcSmProp propname="Unc_FileName" vt="8"&gt;</span>
<span class="t" style="left:233.75px;top:495.84px;font-size:11px;line-height:15px;transform:scaleX(0.9780);"><u>\\DJOWHAR\Users\User\OneDrive\2019</u></span>
<span class="t" style="left:426.25px;top:495.84px;font-size:11px;line-height:15px;transform:scaleX(0.9598);"> Узген\Коллектор Север (по ИТУ).dwg&lt;/AcSmProp&gt;</span>
<span class="t" style="left:15.50px;top:508.09px;font-size:11px;line-height:15px;transform:scaleX(0.9267);">&lt;/AcSmAcDbLayoutReference&gt;</span>
<span class="t" style="left:15.50px;top:520.34px;font-size:11px;line-height:15px;transform:scaleX(0.8995);">&lt;AcSmSheetViews </span>
<span class="t" style="left:102.50px;top:520.34px;font-size:11px;line-height:15px;transform:scaleX(0.9161);">clsid="gF40F931B-64BC-4B90-9FC8-A11A77D6815B" </span>
<span class="t" style="left:349.50px;top:520.34px;font-size:11px;line-height:15px;transform:scaleX(0.9041);">ID="gE3522654-29BE-4FB2-850C-96CDBF3C5EA0"</span>
<span class="t" style="left:583.50px;top:520.34px;font-size:11px;line-height:15px;transform:scaleX(0.9547);"> propname="SheetViews" vt="13" /&gt;</span>
<span class="t" style="left:15.50px;top:532.59px;font-size:11px;line-height:15px;transform:scaleX(0.9319);">&lt;AcSmProp propname="Title" vt="8"&gt;</span>
<span class="t" style="left:187.50px;top:532.59px;font-size:11px;line-height:15px;transform:scaleX(0.9132);">титул 1&lt;/AcSmProp&gt;</span>
<span class="t" style="left:909.30px;top:434.19px;font-size:11px;line-height:15px;transform:scaleX(0.9604);">Категория</span>
<span class="t" style="left:909.30px;top:455.02px;font-size:11px;line-height:15px;transform:scaleX(0.9205);">Описание</span>
<span class="t" style="left:909.30px;top:475.85px;font-size:11px;line-height:15px;transform:scaleX(0.9513);">Цель выпуска листа</span>
<span class="t" style="left:909.30px;top:496.68px;font-size:11px;line-height:15px;transform:scaleX(0.9180);">AcDbHandle</span>
<div class="clip" style="left:1027.50px;top:494.28px;width:140.50px;height:15px"><span class="t" style="left:0;top:0;font-size:11px;line-height:15px;transform:scaleX(0.9224);">153AFADB</span></div>
<span class="t" style="left:909.30px;top:517.51px;font-size:11px;line-height:15px;transform:scaleX(0.9342);">Относительный путь</span>
<div class="clip" style="left:1027.50px;top:515.11px;width:140.50px;height:15px"><span class="t" style="left:0;top:0;font-size:11px;line-height:15px;transform:scaleX(0.9500);">%OneDrive%\2019 Узген\Коллектор</span></div>
<span class="t" style="left:909.30px;top:538.34px;font-size:11px;line-height:15px;transform:scaleX(0.9278);">Абсолютный путь</span>
<div class="clip" style="left:1027.50px;top:535.94px;width:140.50px;height:15px"><span class="t" style="left:0;top:0;font-size:11px;line-height:15px;transform:scaleX(0.9500);">C:\Users\User\OneDrive\2019 Узген</span></div>
<span class="t" style="left:909.30px;top:559.17px;font-size:11px;line-height:15px;transform:scaleX(0.9463);">Имя листа</span>
<div class="clip" style="left:1027.50px;top:556.77px;width:140.50px;height:15px"><span class="t" style="left:0;top:0;font-size:11px;line-height:15px;transform:scaleX(0.9005);">титул 1</span></div>
<span class="t" style="left:909.30px;top:580.00px;font-size:11px;line-height:15px;transform:scaleX(0.9485);">Имя документа</span>
<div class="clip" style="left:1027.50px;top:577.60px;width:140.50px;height:15px"><span class="t" style="left:0;top:0;font-size:11px;line-height:15px;transform:scaleX(0.9500);">..\Коллектор Север (по ИТУ).dwg</span></div>
<span class="t" style="left:909.30px;top:600.83px;font-size:11px;line-height:15px;transform:scaleX(0.9184);">Специальный путь</span>
<div class="clip" style="left:1027.50px;top:598.43px;width:140.50px;height:15px"><span class="t" style="left:0;top:0;font-size:11px;line-height:15px;transform:scaleX(0.9201);">$(CSIDL_PROFILE)\OneDrive\</span></div>
<span class="t" style="left:909.30px;top:621.66px;font-size:11px;line-height:15px;transform:scaleX(0.9532);">_FileName</span>
<div class="clip" style="left:1027.50px;top:619.26px;width:140.50px;height:15px"><span class="t" style="left:0;top:0;font-size:11px;line-height:15px;transform:scaleX(0.9500);">\\DJOWHAR\Users\User\One</span></div>
<span class="t" style="left:13.60px;top:653.74px;font-size:12px;line-height:16px;transform:scaleX(0.9104);color:#111;">15.735Гб доступно из 31.115Гб, я потребляю 169.0Мб</span>
<div class="b" style="left:13.00px;top:400.00px;width:1172.00px;height:1.00px;background:rgba(0,0,0,.22);"></div>
<div class="b" style="left:13.00px;top:401.00px;width:1172.00px;height:1.00px;background:#2e2e2e;"></div>
<div class="b" style="left:4.00px;top:402.00px;width:1188.00px;height:6.00px;background:#fafafa;"></div>
<div class="b" style="left:884.00px;top:622.00px;width:301.00px;height:15.50px;background:#f0f0f0;"></div>
<div class="b" style="left:899.00px;top:629.00px;width:47.50px;height:2.00px;background:#909090;border-radius:1px;"></div>
</body></html>
